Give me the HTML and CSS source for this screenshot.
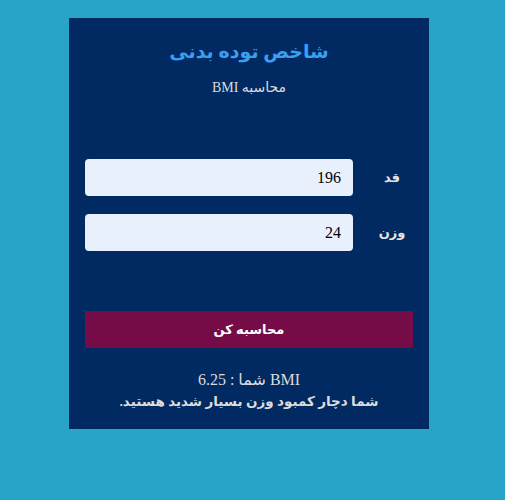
FILE: index.html
```html
<!DOCTYPE html>
<html lang="fa" dir="rtl">
<head>
<meta charset="utf-8">
<title>شاخص توده بدنی</title>
<link rel="stylesheet" href="styles.css">
</head>
<body>
<div class="page">
  <div class="card">
    <h1 class="title">شاخص توده بدنی</h1>
    <p class="subtitle">محاسبه BMI</p>
    <form class="form">
      <div class="row">
        <label class="label" for="h">قد</label>
        <input class="field" id="h" type="text" value="196">
      </div>
      <div class="row">
        <label class="label" for="w">وزن</label>
        <input class="field" id="w" type="text" value="24">
      </div>
      <button class="btn" type="button">محاسبه کن</button>
    </form>
    <div class="result">
      <p class="bmi">BMI شما : 6.25</p>
      <p class="msg">شما دچار کمبود وزن بسیار شدید هستید.</p>
    </div>
  </div>
</div>
</body>
</html>
```
FILE: styles.css
```css
html, body {
  margin: 0;
  padding: 0;
  background: #29a4c9;
  height: 100%;
}
body {
  font-family: "Liberation Serif", "DejaVu Sans", serif;
}
.page {
  padding: 18px 0 0 69px;
  direction: ltr;
}
.card {
  direction: rtl;
  width: 360px;
  height: 411px;
  box-sizing: border-box;
  background: #012a62;
  padding: 20px 16px 0;
}
.title {
  margin: 0;
  text-align: center;
  color: #3a9ff0;
  font-size: 19px;
  font-weight: bold;
  line-height: 28px;
}
.subtitle {
  margin: 12px 0 0;
  text-align: center;
  color: #dcdcdc;
  font-size: 14px;
  line-height: 20px;
}
.form {
  margin-top: 61px;
  display: flex;
  flex-direction: column;
}
.row {
  display: flex;
  align-items: center;
  height: 37px;
  margin-bottom: 18px;
}
.label {
  width: 60px;
  box-sizing: border-box;
  padding-left: 18px;
  text-align: center;
  color: #e6e6e6;
  font-size: 13px;
  font-weight: bold;
}
.field {
  width: 268px;
  height: 37px;
  box-sizing: border-box;
  border: none;
  border-radius: 4px;
  background: #e8f0fe;
  padding: 0 12px;
  font-family: "Liberation Serif", serif;
  font-size: 16px;
  color: #000;
  text-align: right;
  direction: rtl;
}
.btn {
  margin-top: 42px;
  height: 37px;
  width: 328px;
  border: none;
  background: #760c47;
  color: #fff;
  font-family: "Liberation Serif", "DejaVu Sans", serif;
  font-size: 13px;
  font-weight: bold;
}
.result {
  margin-top: 21px;
  text-align: center;
  color: #dcdcdc;
}
.bmi {
  margin: 0;
  font-size: 16px;
  line-height: 22px;
}
.msg {
  margin: 0;
  font-size: 13.5px;
  font-weight: bold;
  line-height: 22px;
}
```
